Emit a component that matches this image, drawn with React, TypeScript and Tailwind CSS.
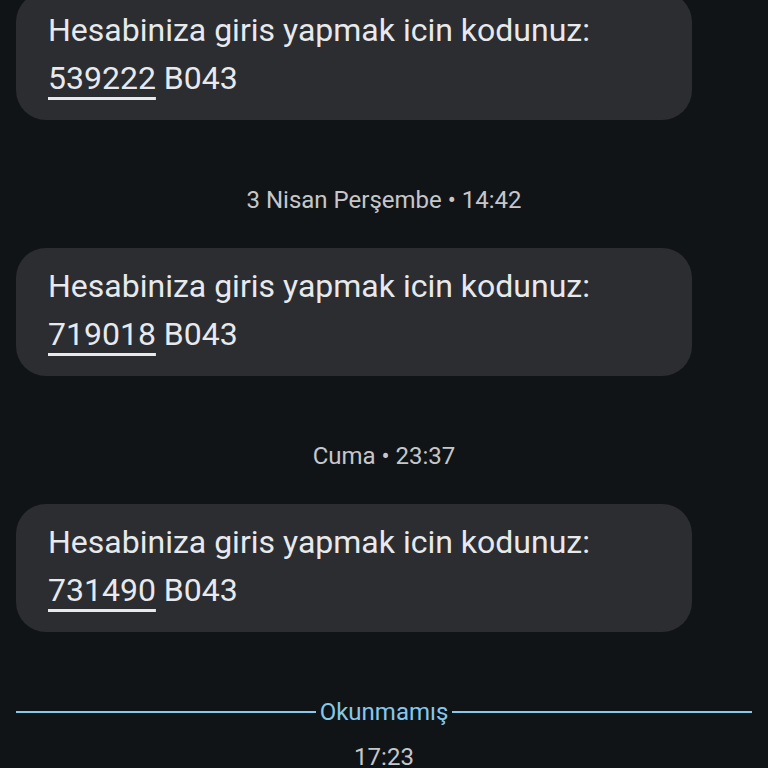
const messages = [
  { code: "539222", label: "3 Nisan Perşembe • 14:42" },
  { code: "719018", label: "Cuma • 23:37" },
  { code: "731490", label: null },
];

function Bubble({ code }: { code: string }) {
  return (
    <div className="mr-[76px] ml-4 rounded-[30px] bg-[#2b2d31] px-8 pt-[14px] pb-[18px] text-[32px] leading-[48px] text-[#e8e9ec]">
      <p>Hesabiniza giris yapmak icin kodunuz:</p>
      <p>
        <span className="underline decoration-[3px] underline-offset-[8px]">{code}</span> B043
      </p>
    </div>
  );
}

export default function App() {
  return (
    <div
      className="h-[768px] w-[768px] overflow-hidden bg-[#111417]"
      style={{ fontFamily: "Roboto, 'Noto Sans', sans-serif" }}
    >
      <div className="-mt-2 flex flex-col">
        {messages.map((m) => (
          <div key={m.code} className="flex flex-col">
            <Bubble code={m.code} />
            {m.label && (
              <div className="pt-16 pb-8 text-center text-2xl leading-8 text-[#c5c7cb]">
                {m.label}
              </div>
            )}
          </div>
        ))}

        {/* Unread divider */}
        <div className="mt-[64px] flex items-center gap-1 px-4">
          <div className="h-[2px] flex-1 bg-[#86c8ea]" />
          <span className="text-2xl leading-8 text-[#86c8ea]">Okunmamış</span>
          <div className="h-[2px] flex-1 bg-[#86c8ea]" />
        </div>
        <div className="mt-[13px] text-center text-2xl leading-8 text-[#c5c7cb]">17:23</div>
      </div>
    </div>
  );
}
